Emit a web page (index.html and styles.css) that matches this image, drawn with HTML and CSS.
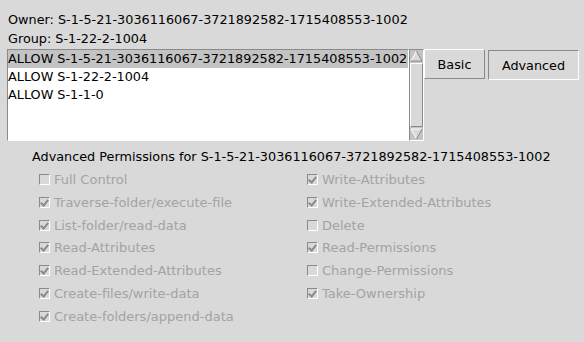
FILE: index.html
```html
<!DOCTYPE html>
<html lang="en">

<head>
    <meta charset="UTF-8">
    <title>Permissions</title>
    <link rel="stylesheet" href="styles.css">
</head>

<body>

    <div class="owner-info">
        <div class="info-line">Owner: S-1-5-21-3036116067-3721892582-1715408553-1002</div>
        <div class="info-line">Group: S-1-22-2-1004</div>
    </div>

    <div class="top-row">
        <div class="acl-list">
            <div class="acl-item selected">ALLOW S-1-5-21-3036116067-3721892582-1715408553-1002</div>
            <div class="acl-item">ALLOW S-1-22-2-1004</div>
            <div class="acl-item">ALLOW S-1-1-0</div>
        </div>
        <div class="scrollbar">
            <svg class="arrow" width="13" height="12" viewBox="0 0 13 12">
                <polygon points="6.5,1 12,11 1,11" fill="#d9d9d9" />
                <polyline points="1,11 6.5,1" stroke="#fff" fill="none" />
                <polyline points="6.5,1 12,11 1,11" stroke="#8a8a8a" fill="none" />
            </svg>
            <div class="slider"></div>
            <svg class="arrow" width="13" height="12" viewBox="0 0 13 12">
                <polygon points="1,1 12,1 6.5,11" fill="#d9d9d9" />
                <polyline points="6.5,11 1,1 12,1" stroke="#fff" fill="none" />
                <polyline points="12,1 6.5,11" stroke="#8a8a8a" fill="none" />
            </svg>
        </div>
        <div class="mode-buttons">
            <button class="mode-button">Basic</button>
            <button class="mode-button active">Advanced</button>
        </div>
    </div>

    <div class="perm-title">Advanced Permissions for S-1-5-21-3036116067-3721892582-1715408553-1002</div>

    <div class="perm-grid">
        <div class="perm-col">
            <label class="perm"><span class="box"></span>Full Control</label>
            <label class="perm"><span class="box checked"></span>Traverse-folder/execute-file</label>
            <label class="perm"><span class="box checked"></span>List-folder/read-data</label>
            <label class="perm"><span class="box checked"></span>Read-Attributes</label>
            <label class="perm"><span class="box checked"></span>Read-Extended-Attributes</label>
            <label class="perm"><span class="box checked"></span>Create-files/write-data</label>
            <label class="perm"><span class="box checked"></span>Create-folders/append-data</label>
        </div>
        <div class="perm-col">
            <label class="perm"><span class="box checked"></span>Write-Attributes</label>
            <label class="perm"><span class="box checked"></span>Write-Extended-Attributes</label>
            <label class="perm"><span class="box"></span>Delete</label>
            <label class="perm"><span class="box checked"></span>Read-Permissions</label>
            <label class="perm"><span class="box"></span>Change-Permissions</label>
            <label class="perm"><span class="box checked"></span>Take-Ownership</label>
        </div>
    </div>

</body>

</html>
```

FILE: styles.css
```css
body {
    font-family: 'DejaVu Sans', sans-serif;
    font-size: 12.8px;
    margin: 0;
    padding: 0;
    background-color: #d9d9d9;
    color: #000;
}

.owner-info {
    padding: 10px 0 0 8px;
}

.info-line {
    height: 19px;
    line-height: 19px;
}

.top-row {
    display: flex;
    align-items: flex-start;
    margin-top: 1px;
    padding-left: 7px;
}

.acl-list {
    width: 400px;
    height: 90px;
    background-color: #fff;
    border-top: 1px solid #8a8a8a;
    border-left: 1px solid #8a8a8a;
    border-bottom: 1px solid #fff;
    border-right: 1px solid #fff;
}

.acl-item {
    height: 18px;
    line-height: 18px;
}

.acl-item.selected {
    background-color: #c3c3c3;
}

.scrollbar {
    width: 13px;
    height: 90px;
    display: flex;
    flex-direction: column;
    border: 1px solid #8a8a8a;
    border-right-color: #fff;
    border-bottom-color: #fff;
    background-color: #c3c3c3;
}

.arrow {
    display: block;
    flex: none;
}

.slider {
    flex: 1;
    margin: 1px 0;
    background-color: #d9d9d9;
    border: 1px solid #fff;
    border-right-color: #8a8a8a;
    border-bottom-color: #8a8a8a;
}

.mode-buttons {
    display: flex;
    gap: 3px;
}

.mode-button {
    font-family: inherit;
    font-size: inherit;
    color: #000;
    background-color: #d9d9d9;
    width: 61px;
    height: 30px;
    padding: 0;
    margin: 0;
    border: 1px solid #fff;
    border-right-color: #8a8a8a;
    border-bottom-color: #8a8a8a;
}

.mode-button.active {
    width: 91px;
    margin-top: 1px;
    border: 1px solid #8a8a8a;
    border-right-color: #fff;
    border-bottom-color: #fff;
}

.perm-title {
    padding-left: 32px;
    margin-top: 7px;
    height: 18px;
    line-height: 18px;
}

.perm-grid {
    display: flex;
    padding-left: 39px;
    margin-top: 2px;
}

.perm-col {
    display: flex;
    flex-direction: column;
    width: 268px;
}

.perm {
    display: flex;
    align-items: center;
    height: 22.83px;
    font-size: 13px;
    color: #a3a3a3;
}

.box {
    width: 9px;
    height: 9px;
    margin-right: 4px;
    border: 1px solid #8a8a8a;
    border-right-color: #fff;
    border-bottom-color: #fff;
    position: relative;
}

.box.checked::after {
    content: '';
    position: absolute;
    left: 2px;
    top: 0;
    width: 3px;
    height: 6px;
    border-right: 2px solid #8a8a8a;
    border-bottom: 2px solid #8a8a8a;
    transform: rotate(40deg);
}
```
